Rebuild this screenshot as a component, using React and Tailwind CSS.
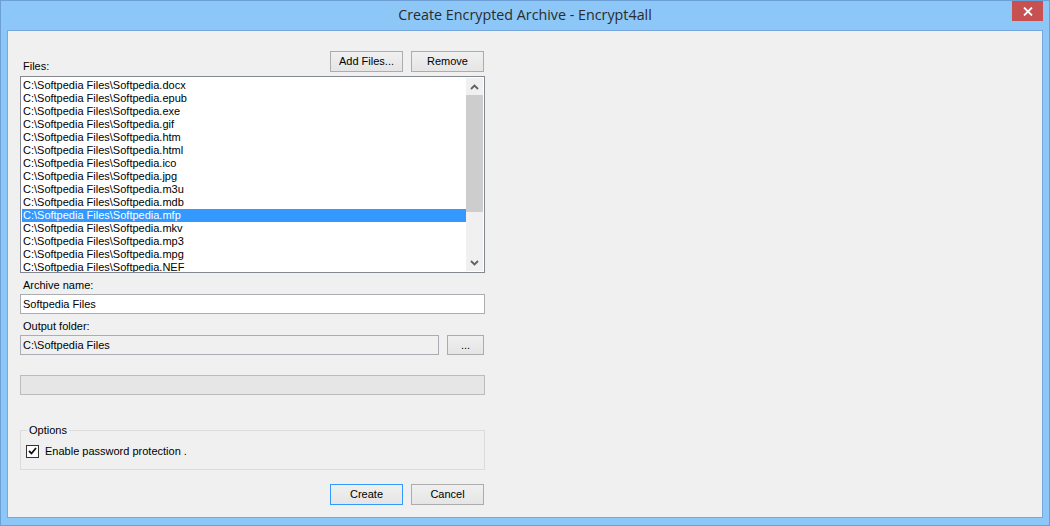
import React from "react";

const files = [
  "docx", "epub", "exe", "gif", "htm", "html", "ico", "jpg", "m3u", "mdb", "mfp", "mkv", "mp3", "mpg", "NEF",
];

function Btn({ children, def, className = "" }) {
  return (
    <div
      className={
        "h-[21px] w-[73px] flex items-center justify-center border bg-gradient-to-b from-[#f0f0f0] to-[#e5e5e5] text-[11px] text-black " +
        (def ? "border-[#3399ff] " : "border-[#acacac] ") +
        className
      }
    >
      {children}
    </div>
  );
}

export default function App() {
  return (
    <div
      className="w-[1050px] h-[526px] bg-[#8cc7f8] border border-[#6b9fd6] flex flex-col overflow-hidden"
      style={{ fontFamily: '"Liberation Sans", Arial, sans-serif' }}
    >
      {/* title bar */}
      <div className="h-[29px] relative flex items-center justify-center shrink-0">
        <span
          className="text-[14.3px] text-[#2b2b2b] -mt-[1px]"
          style={{ fontFamily: '"Open Sans", "Noto Sans", sans-serif' }}
        >
          Create Encrypted Archive - Encrypt4all
        </span>
        <div className="absolute right-[6px] top-0 w-[31px] h-[20px] bg-[#c75050] flex items-center justify-center">
          <svg width="10" height="9" viewBox="0 0 10 9">
            <path d="M1 0.5 L9 8.5 M9 0.5 L1 8.5" stroke="white" strokeWidth="1.8" />
          </svg>
        </div>
      </div>

      {/* client */}
      <div className="ml-[6px] mr-[6px] mb-[7px] flex-1 border border-[#77a7dc] bg-[#f0f0f0] text-[11px] text-black">
        <div className="ml-[12px] w-[465px] pt-[20px] flex flex-col">
          {/* files header */}
          <div className="flex items-end justify-between">
            <div className="pl-[3px] leading-[13px] mb-[-1px]">Files:</div>
            <div className="flex gap-[8px] pr-[1px]">
              <Btn>Add Files...</Btn>
              <Btn>Remove</Btn>
            </div>
          </div>

          {/* listbox */}
          <div className="mt-[4px] h-[197px] border border-[#828790] bg-white flex">
            <div className="flex-1 pt-[2px] pl-[1px] overflow-hidden">
              {files.map((ext) => (
                <div
                  key={ext}
                  className={
                    "h-[13px] leading-[13px] pl-[1px] whitespace-nowrap " +
                    (ext === "mfp" ? "bg-[#3399ff] text-white" : "")
                  }
                >
                  C:\Softpedia Files\Softpedia.{ext}
                </div>
              ))}
            </div>
            <div className="w-[17px] bg-[#f0f0f0] flex flex-col mr-[1px] mb-[1px] mt-[1px]">
              <div className="h-[17px] flex items-center justify-center">
                <svg width="9" height="6" viewBox="0 0 9 6">
                  <path d="M1 5 L4.5 1.5 L8 5" stroke="#606060" strokeWidth="1.8" fill="none" />
                </svg>
              </div>
              <div className="h-[117px] bg-[#cdcdcd]" />
              <div className="flex-1" />
              <div className="h-[17px] flex items-center justify-center">
                <svg width="9" height="6" viewBox="0 0 9 6">
                  <path d="M1 1 L4.5 4.5 L8 1" stroke="#606060" strokeWidth="1.8" fill="none" />
                </svg>
              </div>
            </div>
          </div>

          {/* archive name */}
          <div className="mt-[6px] pl-[3px] h-[13px] leading-[13px]">Archive name:</div>
          <div className="mt-[2px] h-[20px] border border-[#abadb3] bg-white flex items-center pl-[2px]">
            Softpedia Files
          </div>

          {/* output folder */}
          <div className="mt-[6px] pl-[3px] h-[13px] leading-[13px]">Output folder:</div>
          <div className="mt-[2px] flex gap-[8px]">
            <div className="flex-1 h-[20px] border border-[#abadb3] bg-[#f0f0f0] flex items-center pl-[2px]">
              C:\Softpedia Files
            </div>
            <div className="h-[20px] w-[37px] mr-[1px] border border-[#acacac] bg-gradient-to-b from-[#f0f0f0] to-[#e5e5e5] flex items-center justify-center">
              ...
            </div>
          </div>

          {/* progress */}
          <div className="mt-[20px] h-[20px] border border-[#bcbcbc] bg-[#e6e6e6]" />

          {/* options */}
          <fieldset className="mt-[29px] h-[46px] border border-[#dcdcdc] px-[5px]">
            <legend className="ml-[1px] px-[2px] leading-[13px]">Options</legend>
            <div className="flex items-center mt-[6px]">
              <div className="w-[13px] h-[13px] border border-[#333] bg-white flex items-center justify-center">
                <svg width="9" height="8" viewBox="0 0 9 8">
                  <path d="M1 4 L3.5 6.5 L8 1" stroke="#111" strokeWidth="1.8" fill="none" />
                </svg>
              </div>
              <span className="ml-[6px]">Enable password protection .</span>
            </div>
          </fieldset>

          {/* bottom buttons */}
          <div className="mt-[14px] flex justify-end gap-[8px] pr-[1px]">
            <Btn def>Create</Btn>
            <Btn>Cancel</Btn>
          </div>
        </div>
      </div>
    </div>
  );
}
